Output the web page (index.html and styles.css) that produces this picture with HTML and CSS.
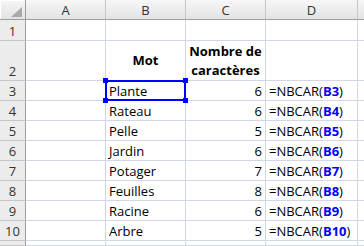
FILE: index.html
```html
<!DOCTYPE html>
<html>
<head>
	<title>NBCAR</title>
	<link rel="stylesheet" href="styles.css">
</head>
<body>
	<div class="sheet">
		<!-- header row -->
		<div class="corner">
			<svg width="25" height="19" viewBox="0 0 25 19"><polygon points="11,17 22,17 22,7" fill="#a9a9a9"/></svg>
		</div>
		<div class="hd">A</div>
		<div class="hd">B</div>
		<div class="hd">C</div>
		<div class="hd">D</div>
		<div class="hd last"></div>

		<div class="rh">1</div>
		<div class="c"></div><div class="c"></div><div class="c"></div><div class="c"></div><div class="c"></div>

		<div class="rh">2</div>
		<div class="c"></div>
		<div class="c title">Mot</div>
		<div class="c title">Nombre de caractères</div>
		<div class="c"></div><div class="c"></div>

		<div class="rh">3</div>
		<div class="c"></div><div class="c">Plante</div><div class="c num">6</div>
		<div class="c">=NBCAR(<span class="ref">B3</span>)</div><div class="c"></div>

		<div class="rh">4</div>
		<div class="c"></div><div class="c">Rateau</div><div class="c num">6</div>
		<div class="c">=NBCAR(<span class="ref">B4</span>)</div><div class="c"></div>

		<div class="rh">5</div>
		<div class="c"></div><div class="c">Pelle</div><div class="c num">5</div>
		<div class="c">=NBCAR(<span class="ref">B5</span>)</div><div class="c"></div>

		<div class="rh">6</div>
		<div class="c"></div><div class="c">Jardin</div><div class="c num">6</div>
		<div class="c">=NBCAR(<span class="ref">B6</span>)</div><div class="c"></div>

		<div class="rh">7</div>
		<div class="c"></div><div class="c">Potager</div><div class="c num">7</div>
		<div class="c">=NBCAR(<span class="ref">B7</span>)</div><div class="c"></div>

		<div class="rh">8</div>
		<div class="c"></div><div class="c">Feuilles</div><div class="c num">8</div>
		<div class="c">=NBCAR(<span class="ref">B8</span>)</div><div class="c"></div>

		<div class="rh">9</div>
		<div class="c"></div><div class="c">Racine</div><div class="c num">6</div>
		<div class="c">=NBCAR(<span class="ref">B9</span>)</div><div class="c"></div>

		<div class="rh">10</div>
		<div class="c"></div><div class="c">Arbre</div><div class="c num">5</div>
		<div class="c">=NBCAR(<span class="ref">B10</span>)</div><div class="c"></div>

		<div class="rh"></div>
		<div class="c"></div><div class="c"></div><div class="c"></div><div class="c"></div><div class="c"></div>

		<!-- range highlight on B3 -->
		<div class="range">
			<span class="knob tl"></span>
			<span class="knob tr"></span>
			<span class="knob bl"></span>
			<span class="knob br"></span>
		</div>
	</div>
</body>
</html>
```

FILE: styles.css
```css
* {
	margin: 0;
	padding: 0;
	box-sizing: border-box;
}
body {
	width: 364px;
	height: 246px;
	overflow: hidden;
	background: #fff;
	font-family: "Open Sans", sans-serif;
	font-size: 13px;
	color: #000;
}
.sheet {
	position: relative;
	display: grid;
	grid-template-columns: 26px 80px 80px 80px 92px 1fr;
	grid-template-rows: 20px 21px 40px repeat(8, 20px) 1fr;
	width: 364px;
	height: 246px;
}
.c,
.hd,
.rh,
.corner {
	display: flex;
	align-items: flex-end;
	line-height: 17px;
	white-space: nowrap;
	overflow: hidden;
}
.c {
	padding: 0 3px;
	border-right: 1px solid #d0d7e5;
	border-bottom: 1px solid #d0d7e5;
}
.c.num {
	justify-content: flex-end;
}
.c.title {
	font-weight: bold;
	justify-content: center;
	align-items: center;
	text-align: center;
	white-space: normal;
	line-height: 19px;
	padding: 0 2px;
}
.ref {
	color: #0000ff;
	font-weight: bold;
}
.corner {
	background: linear-gradient(#f6f6f6, #e2e2e2);
	border-right: 1px solid #9e9e9e;
	border-bottom: 1px solid #9e9e9e;
	box-shadow: inset 1px 1px 0 #fff;
}
.hd {
	justify-content: center;
	background: linear-gradient(#f7f7f7, #e3e3e3);
	border-right: 1px solid #c6c6c6;
	border-bottom: 1px solid #9e9e9e;
	color: #333;
}
.hd.last {
	border-right: none;
}
.rh {
	justify-content: center;
	background: #ececec;
	border-right: 1px solid #9e9e9e;
	border-bottom: 1px solid #c6c6c6;
	color: #333;
}
.range {
	position: absolute;
	left: 105px;
	top: 80px;
	width: 81px;
	height: 21px;
	border: 2px solid #0000ff;
}
.knob {
	position: absolute;
	width: 5px;
	height: 5px;
	background: #0000ff;
}
.knob.tl { left: -4px; top: -4px; }
.knob.tr { right: -4px; top: -4px; }
.knob.bl { left: -4px; bottom: -4px; }
.knob.br { right: -4px; bottom: -4px; }
```
